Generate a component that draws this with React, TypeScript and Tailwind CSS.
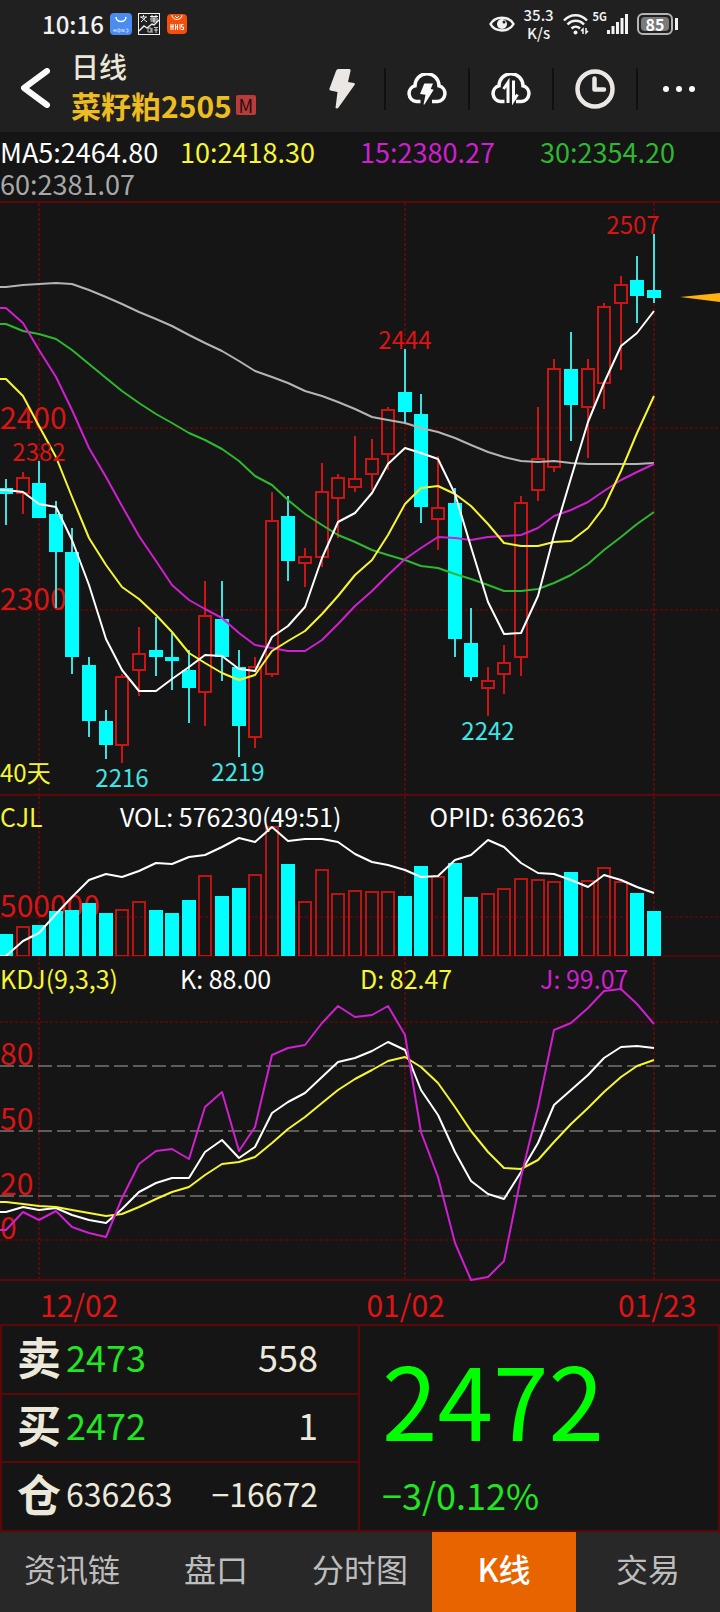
import type { ReactNode } from 'react';

interface Candle {
  up: boolean;
  high: number;
  top: number;
  bottom: number;
  low: number;
}

const STEP = 16.615;
const xAt = (i: number) => Math.round(6 + STEP * i);

// direction, high, body top, body bottom, low (chart units)
const RAW: [string, number, number, number, number][] = [
  ['d', 479, 488, 494, 525],
  ['u', 472, 477, 494, 514],
  ['d', 461, 483, 518, 518],
  ['d', 501, 514, 552, 608],
  ['d', 528, 552, 657, 674],
  ['d', 657, 665, 721, 737],
  ['d', 710, 721, 745, 759],
  ['u', 674, 676, 746, 763],
  ['u', 627, 653, 671, 696],
  ['d', 617, 650, 657, 676],
  ['d', 633, 657, 661, 690],
  ['d', 650, 670, 688, 723],
  ['u', 581, 615, 693, 726],
  ['d', 581, 619, 657, 681],
  ['d', 650, 667, 726, 757],
  ['u', 657, 666, 738, 748],
  ['u', 492, 520, 675, 677],
  ['d', 496, 516, 561, 581],
  ['u', 548, 556, 564, 587],
  ['u', 463, 491, 558, 567],
  ['u', 474, 477, 499, 538],
  ['u', 436, 478, 488, 492],
  ['u', 439, 458, 475, 490],
  ['u', 407, 409, 455, 470],
  ['d', 349, 392, 412, 423],
  ['d', 394, 414, 507, 523],
  ['u', 456, 507, 520, 550],
  ['d', 488, 503, 639, 657],
  ['d', 608, 643, 677, 681],
  ['u', 667, 680, 689, 716],
  ['u', 645, 662, 675, 694],
  ['u', 496, 502, 658, 676],
  ['u', 407, 458, 491, 501],
  ['u', 359, 368, 468, 472],
  ['d', 332, 369, 405, 441],
  ['u', 359, 368, 408, 458],
  ['u', 303, 306, 384, 409],
  ['u', 276, 284, 304, 370],
  ['d', 256, 280, 296, 323],
  ['d', 234, 290, 298, 303],
];

const candles: Candle[] = RAW.map(([dir, high, top, bottom, low]) => ({ up: dir === 'u', high, top, bottom, low }));

const ma5 = [490, 492, 504, 507, 540, 585, 639, 670, 691, 691, 679, 667, 655, 656, 669, 671, 637, 626, 607, 558, 522, 513, 493, 464, 448, 453, 459, 494, 547, 602, 634, 633, 596, 535, 478, 422, 383, 346, 333, 311];
const ma10 = [379, 396, 426, 457, 497, 538, 565, 587, 599, 615, 632, 653, 663, 673, 680, 675, 651, 641, 631, 614, 596, 575, 560, 535, 504, 488, 486, 494, 506, 524, 543, 546, 546, 542, 541, 528, 507, 471, 433, 396];
const ma15 = [308, 323, 350, 377, 410, 448, 477, 506, 536, 561, 585, 600, 609, 618, 633, 645, 648, 651, 651, 640, 624, 606, 591, 575, 559, 548, 537, 538, 540, 537, 536, 535, 528, 516, 510, 502, 491, 480, 472, 464];
const ma30 = [324, 331, 334, 339, 350, 364, 378, 391, 403, 414, 423, 433, 440, 449, 461, 476, 485, 500, 514, 525, 535, 542, 550, 555, 560, 566, 568, 574, 579, 585, 591, 591, 589, 583, 575, 564, 550, 537, 524, 512];
const ma60 = [287, 285, 284, 283, 284, 290, 297, 304, 312, 319, 326, 335, 343, 351, 361, 371, 377, 383, 391, 396, 402, 409, 417, 420, 423, 428, 432, 438, 445, 452, 457, 461, 462, 461, 463, 464, 464, 464, 464, 463];

const volume = [934, 926, 925, 911, 910, 903, 913, 909, 901, 910, 913, 900, 875, 896, 888, 874, 826, 864, 901, 869, 893, 890, 891, 891, 896, 866, 876, 863, 897, 893, 888, 878, 879, 881, 872, 880, 867, 881, 893, 911];
const openInterest = [956, 941, 933, 914, 897, 880, 874, 877, 871, 863, 864, 857, 855, 847, 838, 842, 827, 841, 839, 839, 842, 854, 862, 865, 870, 877, 876, 860, 855, 840, 847, 863, 873, 874, 880, 887, 875, 880, 887, 893];

const kLine = [1212, 1207, 1210, 1208, 1215, 1220, 1223, 1209, 1192, 1183, 1178, 1178, 1152, 1140, 1158, 1147, 1113, 1102, 1093, 1077, 1062, 1058, 1051, 1042, 1050, 1090, 1115, 1152, 1181, 1194, 1199, 1172, 1143, 1105, 1090, 1075, 1058, 1047, 1046, 1048];
const dLine = [1202, 1204, 1206, 1207, 1210, 1213, 1216, 1214, 1207, 1199, 1192, 1187, 1175, 1164, 1162, 1157, 1143, 1129, 1117, 1103, 1090, 1079, 1070, 1061, 1057, 1067, 1083, 1107, 1131, 1152, 1168, 1169, 1160, 1142, 1124, 1108, 1092, 1077, 1066, 1060];
const jLine = [1230, 1212, 1220, 1211, 1227, 1233, 1237, 1198, 1164, 1151, 1149, 1159, 1107, 1092, 1151, 1127, 1055, 1048, 1045, 1023, 1006, 1017, 1015, 1006, 1035, 1132, 1177, 1243, 1280, 1277, 1261, 1177, 1107, 1030, 1023, 1008, 991, 989, 1004, 1024];

function Line({ data, color }: { data: number[]; color: string }) {
  const points = [`0,${data[0]}`, ...data.map((y, i) => `${xAt(i)},${y}`)].join(' ');
  return <polyline points={points} fill="none" stroke={color} strokeWidth="2" strokeLinejoin="round" />;
}

// Month markers shared by all three panels
function VerticalGrid({ y1, y2 }: { y1: number; y2: number }) {
  return (
    <g stroke="#5a0a0a" strokeWidth="2" strokeDasharray="3 2">
      {[39, 405, 654].map((x) => (
        <line key={x} x1={x} x2={x} y1={y1} y2={y2} />
      ))}
    </g>
  );
}

function DottedLine({ y }: { y: number }) {
  return <line x1="0" x2="720" y1={y} y2={y} stroke="#4c0a0a" strokeWidth="2" strokeDasharray="3 2" />;
}

function SolidLine({ y }: { y: number }) {
  return <line x1="0" x2="720" y1={y} y2={y} stroke="#5c0808" strokeWidth="2" />;
}

function PriceChart() {
  return (
    <svg viewBox="0 201 720 593" className="block w-full" role="img" aria-label="日线">
      <SolidLine y={202} />
      <VerticalGrid y1={203} y2={794} />
      <DottedLine y={428} />
      <DottedLine y={610} />
      <g className="text-[30px]" fill="#da1414">
        <text x="0" y="429">2400</text>
        <text x="0" y="610">2300</text>
      </g>
      {candles.map((c, i) => {
        const x = xAt(i);
        if (c.up) {
          return (
            <g key={i} fill="none" stroke="#cc1414" strokeWidth="2">
              <line x1={x} x2={x} y1={c.high} y2={c.top} />
              <line x1={x} x2={x} y1={c.bottom} y2={c.low} />
              <rect x={x - 6} y={c.top + 1} width="12" height={c.bottom - c.top - 2} />
            </g>
          );
        }
        return (
          <g key={i}>
            <line x1={x} x2={x} y1={c.high} y2={c.low} stroke="#3fe0e0" strokeWidth="2" />
            <rect x={x - 7} y={c.top} width="14" height={c.bottom - c.top} fill="#00ffff" />
          </g>
        );
      })}
      <Line data={ma60} color="#b4b4b4" />
      <Line data={ma30} color="#2fb82f" />
      <Line data={ma15} color="#d01fd0" />
      <Line data={ma10} color="#f6f632" />
      <Line data={ma5} color="#ffffff" />
      <g className="text-[24px]" fill="#da1414" textAnchor="middle">
        <text x="39" y="461">2382</text>
        <text x="405" y="349">2444</text>
        <text x="633" y="234">2507</text>
      </g>
      <g className="text-[24px]" fill="#40e4e4" textAnchor="middle">
        <text x="122" y="787">2216</text>
        <text x="238" y="781">2219</text>
        <text x="488" y="740">2242</text>
      </g>
      <text x="0" y="782" className="text-[24px]" fill="#f6f632">40天</text>
      <polygon points="680,297 720,293 720,302" fill="#fcb312" />
    </svg>
  );
}

function VolumeChart() {
  return (
    <svg viewBox="0 794 720 162" className="block w-full" role="img" aria-label="CJL">
      <SolidLine y={795} />
      <VerticalGrid y1={796} y2={956} />
      <DottedLine y={917} />
      <text x="0" y="917" className="text-[30px]" fill="#da1414">500000</text>
      <line x1="0" x2="720" y1="956" y2="956" stroke="#4c0a0a" strokeWidth="2" />
      {volume.map((y, i) =>
        candles[i].up ? (
          <rect key={i} x={xAt(i) - 6} y={y + 1} width="12" height={955 - y} fill="none" stroke="#b81414" strokeWidth="2" />
        ) : (
          <rect key={i} x={xAt(i) - 7} y={y} width="14" height={956 - y} fill="#00ffff" />
        ),
      )}
      <Line data={openInterest} color="#ffffff" />
    </svg>
  );
}

function KdjChart() {
  return (
    <svg viewBox="0 956 720 325" className="block w-full" role="img" aria-label="KDJ">
      <line x1="0" x2="720" y1="956" y2="956" stroke="#4c0a0a" strokeWidth="2" />
      <VerticalGrid y1={957} y2={1280} />
      <DottedLine y={1022} />
      <DottedLine y={1240} />
      <g stroke="#5c5c5c" strokeWidth="2" strokeDasharray="14 5">
        {[1066, 1131, 1196].map((y) => (
          <line key={y} x1="0" x2="716" y1={y} y2={y} />
        ))}
      </g>
      <g className="text-[30px]" fill="#da1414">
        <text x="0" y="1065">80</text>
        <text x="0" y="1130">50</text>
        <text x="0" y="1195">20</text>
        <text x="0" y="1239">0</text>
      </g>
      <SolidLine y={1280} />
      <Line data={kLine} color="#ffffff" />
      <Line data={dLine} color="#f6f632" />
      <Line data={jLine} color="#d01fd0" />
    </svg>
  );
}

function StatusBar() {
  return (
    <div className="flex h-12 items-center justify-between pl-[42px] pr-[42px] text-[#f2f2f2]">
      <div className="flex items-center gap-1.5">
        <span className="w-[62px] text-[24px] font-medium leading-6">10:16</span>
        <svg width="22" height="22" viewBox="0 0 22 22">
          <rect width="22" height="22" rx="4" fill="#4a8cf0" />
          <path d="M6 4c0 6 10 6 10 0" fill="none" stroke="#fff" strokeWidth="1.5" />
          <path d="M4 16v3M6 16v3M4 17.5h2M8 16h2v3H8zM12 19v-3l2 3v-3M16 16h2v3h-2" fill="none" stroke="#cfe2ff" strokeWidth="0.8" />
        </svg>
        <svg width="22" height="22" viewBox="0 0 22 22" fill="none" stroke="#f2f2f2">
          <rect x="0.5" y="0.5" width="21" height="21" />
          <path d="M2 4h7M5.500 2v2M3 9l5-5M3 4l6 5M12 3.500h8M14 2v3M18 2v3M12 6h8M12.500 8h7M16 3v7" />
          <path d="M1 18l5-5 3 2 5-4 2 1 5-5" strokeWidth="1.400" />
          <path d="M10 15h3v4h-3zM14 15v5M16 14.500h4M16 17h4M18 15v5" strokeWidth="0.800" />
        </svg>
        <svg width="20" height="20" viewBox="0 0 20 20" className="ml-px">
          <rect width="20" height="20" rx="4" fill="#f4500c" />
          <path d="M5 1c0 6 10 6 10 0M8 2l2 2 2-2" fill="none" stroke="#fff" strokeWidth="1" />
          <path d="M4 10v6M6 10v6M3.500 12.500h3M8.500 10v6M10.500 10v6M8.500 13h2M13 10v5.500M16.500 10.500h-2V13h2v2.500h-2.500" fill="none" stroke="#fff" strokeWidth="1" />
        </svg>
      </div>
      <div className="flex items-center">
        <svg width="26" height="18" viewBox="0 0 26 18" fill="none">
          <path d="M1.500 9C6 .500 20 .500 24.500 9 20 17.500 6 17.500 1.500 9z" stroke="#f2f2f2" strokeWidth="2.500" />
          <circle cx="13" cy="9" r="5" fill="#f2f2f2" />
          <circle cx="15" cy="7" r="1.500" fill="#202020" />
        </svg>
        <span className="ml-2 w-8 text-center text-[15px] font-medium leading-[18px]">
          35.3
          <br />
          K/s
        </span>
        <svg className="ml-2" width="26" height="22" viewBox="0 0 26 22" fill="none" stroke="#f2f2f2" strokeWidth="2.500">
          <path d="M1 7.500C7.500 .500 17.500 .500 24 7.500M4.500 11.500c4.500-5 12-5 16.500 0M8.500 15.500c2.500-2.500 6-2.500 8.500 0" />
          <circle cx="12.500" cy="19.500" r="2" fill="#f2f2f2" stroke="none" />
          <path d="M20 21v-5l-2 2M23 15v5l2-2" strokeWidth="1.500" />
        </svg>
        <span className="ml-1 self-start pt-1 text-[11px] font-bold leading-3">5G</span>
        <svg width="22" height="20" viewBox="0 0 22 20" fill="#f2f2f2">
          <rect x="0" y="16" width="3" height="4" />
          <rect x="4.500" y="12" width="3" height="8" />
          <rect x="9" y="8" width="3" height="12" />
          <rect x="13.500" y="4" width="3" height="16" />
          <rect x="18" y="0" width="3" height="20" />
        </svg>
        <span className="ml-2 flex h-[22px] w-9 rounded-md border-2 border-[#b4b4b4] p-0.5">
          <span className="flex-1 rounded-sm bg-[#7a7a7a] text-center text-[16px] font-bold leading-[14px] text-white">85</span>
        </span>
        <span className="ml-0.5 h-3 w-[3px] bg-[#f2f2f2]" />
      </div>
    </div>
  );
}

function IconButton({ label, divided = true, children }: { label: string; divided?: boolean; children: ReactNode }) {
  return (
    <button
      type="button"
      aria-label={label}
      className={
        divided
          ? 'flex h-[42px] w-[84px] items-center justify-center border-l-2 border-[#101010]'
          : 'flex h-[42px] w-[84px] items-center justify-center'
      }
    >
      {children}
    </button>
  );
}

const CLOUD_LEFT = 'M14.500 28.500H10.500A8 8 0 0 1 9 12.800A12 12 0 0 1 33 12.800A8 8 0 0 1 31.500 28.500H26';

function Header() {
  return (
    <div className="flex h-[84px] items-center">
      <button type="button" aria-label="返回" className="flex h-full w-[71px] items-center pl-5 pb-1">
        <svg width="30" height="40" viewBox="0 0 30 40" fill="none" stroke="#fafafa" strokeWidth="6" strokeLinecap="round" strokeLinejoin="round">
          <path d="M27 3L4 20l23 17" />
        </svg>
      </button>
      <div className="flex-1 pb-2">
        <div className="text-[28px] font-medium leading-[38px] text-[#eae6d8]">日线</div>
        <h1 className="flex items-center gap-1 text-[30px] font-bold leading-[40px] text-[#ecbc20]">
          菜籽粕2505
          <span className="h-5 w-5 rounded-xs bg-[#b83c3c] text-center text-[18px] font-normal leading-5 text-[#2a0c0c]">M</span>
        </h1>
      </div>
      <div className="flex pb-0.5">
        <IconButton label="闪电下单" divided={false}>
          <svg width="26" height="40" viewBox="0 0 26 40" fill="#ebe7e4">
            <path d="M9.500 0H20q2 0 1.500 2L19 13l6 1q1.500.500.500 2L9.500 38.500q-1 1.500-3 .500L8.500 23l-7-1.500q-1.500-.500-1-2L7 2q.700-2 2.500-2z" />
          </svg>
        </IconButton>
        <IconButton label="云条件单">
          <svg width="42" height="32" viewBox="0 0 42 32" fill="none">
            <path d={CLOUD_LEFT} stroke="#fafafa" strokeWidth="3.500" />
            <path d="M18.300 10.500H27l-2.300 5.500 3 .700L18.500 31.500h-1l2-9.800-5.500-.700z" fill="#fafafa" />
          </svg>
        </IconButton>
        <IconButton label="云同步">
          <svg width="42" height="32" viewBox="0 0 42 32" fill="none">
            <path d={CLOUD_LEFT} stroke="#fafafa" strokeWidth="3.500" />
            <path d="M18 30V9.500l-4.500 6.500M23.500 7.500v20l4-6" stroke="#fafafa" strokeWidth="3" />
          </svg>
        </IconButton>
        <IconButton label="周期">
          <svg width="40" height="40" viewBox="0 0 40 40" fill="none">
            <circle cx="20" cy="20" r="17.500" stroke="#ebe7e4" strokeWidth="4.500" />
            <path d="M19.500 9.500v11h9.500" stroke="#ebe7e4" strokeWidth="4.500" strokeLinecap="round" strokeLinejoin="round" />
          </svg>
        </IconButton>
        <IconButton label="更多">
          <svg width="32" height="8" viewBox="0 0 32 8" fill="#fafafa">
            <circle cx="3" cy="4" r="3" />
            <circle cx="16" cy="4" r="3" />
            <circle cx="29" cy="4" r="3" />
          </svg>
        </IconButton>
      </div>
    </div>
  );
}

const quotes = [
  { label: '卖', value: '2473', qty: '558', valueClass: 'pb-2 text-[36px] leading-[48px] text-[#22e622]', qtyClass: 'text-[36px]' },
  { label: '买', value: '2472', qty: '1', valueClass: 'pb-2 text-[36px] leading-[48px] text-[#22e622]', qtyClass: 'text-[36px]' },
  { label: '仓', value: '636263', qty: '−16672', valueClass: 'pb-2 text-[32px] leading-[48px]', qtyClass: 'text-[32px]' },
];

function QuotePanel() {
  return (
    <section className="flex border-2 border-[#5c0808]">
      <table className="w-1/2 border-r-2 border-[#5c0808] text-[#ece8da]">
        <tbody>
          {quotes.map((q) => (
            <tr key={q.label} className="h-[68px] border-b-2 border-[#5c0808] last:border-b-0">
              <th scope="row" className="w-16 pb-2 pl-[15px] text-left text-[44px] font-bold leading-[48px]">
                {q.label}
              </th>
              <td className={q.valueClass}>{q.value}</td>
              <td className={`pb-2 pr-10 text-right leading-[48px] ${q.qtyClass}`}>{q.qty}</td>
            </tr>
          ))}
        </tbody>
      </table>
      <div className="flex w-1/2 flex-col pl-[22px] text-[#00ff00]">
        <div className="text-[100px] leading-[144px]">2472</div>
        <div className="text-[36px] leading-[48px] text-[#22e622]">−3/0.12%</div>
      </div>
    </section>
  );
}

const tabs = ['资讯链', '盘口', '分时图', 'K线', '交易'];

export default function App() {
  return (
    <main lang="zh-CN" className="min-h-screen bg-[#151515] font-['Noto_Sans_CJK_SC',sans-serif]">
      <header className="bg-[#202020]">
        <StatusBar />
        <Header />
      </header>

      <div className="grid grid-cols-4 pt-1 pb-px text-[27px] leading-8">
        <span className="text-white">MA5:2464.80</span>
        <span className="text-[#f6f632]">10:2418.30</span>
        <span className="text-[#d01fd0]">15:2380.27</span>
        <span className="text-[#2fb82f]">30:2354.20</span>
        <span className="text-[#a8a8a8]">60:2381.07</span>
      </div>

      <PriceChart />

      <section className="relative">
        <VolumeChart />
        <div className="absolute inset-x-0 top-1.5 flex text-[25px] leading-8 text-white">
          <span className="w-1/6 text-[#f6f632]">CJL</span>
          <span className="w-[43%]">VOL: 576230(49:51)</span>
          <span>OPID: 636263</span>
        </div>
      </section>

      <section className="relative">
        <KdjChart />
        <div className="absolute inset-x-0 top-1.5 grid grid-cols-4 text-[25px] leading-8">
          <span className="text-[#f6f632]">KDJ(9,3,3)</span>
          <span className="text-white">K: 88.00</span>
          <span className="text-[#f6f632]">D: 82.47</span>
          <span className="text-[#d01fd0]">J: 99.07</span>
        </div>
      </section>

      <div className="flex pt-1 pl-10 text-[30px] leading-[39px] text-[#e01414]">
        <span className="w-[48%]">12/02</span>
        <span className="w-[37%]">01/02</span>
        <span>01/23</span>
      </div>

      <QuotePanel />

      <nav className="flex h-20 bg-[#282828] text-[32px] text-[#bdbdbd]">
        {tabs.map((tab) => (
          <button
            key={tab}
            type="button"
            className={tab === 'K线' ? 'flex-1 bg-[#e86400] pb-2 font-medium text-white' : 'flex-1 pb-2'}
          >
            {tab}
          </button>
        ))}
      </nav>
    </main>
  );
}
